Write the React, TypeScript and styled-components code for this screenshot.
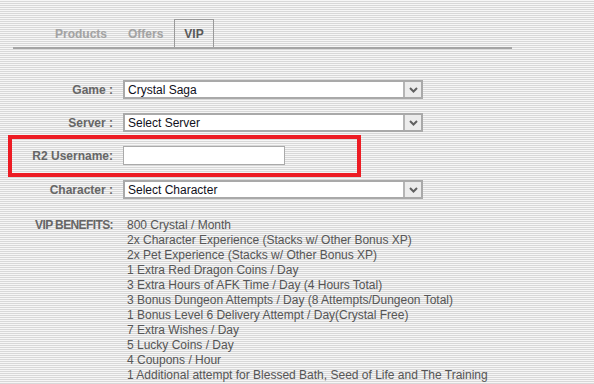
import styled, { createGlobalStyle } from 'styled-components';

const GlobalStyle = createGlobalStyle`
  html, body {
    margin: 0;
    padding: 0;
  }
  body {
    width: 594px;
    height: 384px;
    overflow: hidden;
    font-family: "Liberation Sans", Arial, sans-serif;
    font-size: 12px;
    background: repeating-linear-gradient(
      to bottom,
      #f6f6f6 0px,
      #f6f6f6 1px,
      #d8d8d8 1px,
      #d8d8d8 2px
    );
  }
`;

const Page = styled.div`
  display: flex;
  flex-direction: column;
  padding-top: 19px;
`;

const TabBar = styled.ul`
  display: flex;
  align-items: flex-end;
  margin: 0 0 0 13px;
  padding: 0 0 0 32px;
  width: 467px;
  list-style: none;
  border-bottom: 2px solid #a4a4a4;
`;

const Tab = styled.li<{ $active?: boolean }>`
  height: 26px;
  padding: 1px ${(p) => (p.$active ? '9px' : '9px')} 0;
  margin-right: 1px;
  display: flex;
  align-items: center;
  font-weight: bold;
  font-size: 12px;
  color: ${(p) => (p.$active ? '#5a5a5a' : '#a3a3a3')};
  border: 1px solid ${(p) => (p.$active ? '#9a9a9a' : 'transparent')};
  border-bottom: none;
`;

const Form = styled.div`
  display: flex;
  flex-direction: column;
  margin-top: 31px;
`;

const Row = styled.div<{ $gap?: number }>`
  display: flex;
  align-items: flex-end;
  margin-bottom: ${(p) => p.$gap ?? 0}px;
`;

const Label = styled.label<{ $width?: number; $tight?: boolean }>`
  width: ${(p) => p.$width ?? 113}px;
  flex: none;
  text-align: right;
  font-weight: bold;
  color: #666;
  padding-right: 10px;
  box-sizing: content-box;
  line-height: 15px;
  padding-bottom: 1px;
  letter-spacing: ${(p) => (p.$tight ? '-0.6px' : 'normal')};
`;

const SelectBox = styled.div`
  width: 300px;
  height: 19px;
  box-sizing: border-box;
  border: 2px solid #a9a9a9;
  background: #fff;
  display: flex;
  align-items: center;
  color: #101020;
  font-size: 12px;
`;

const SelectText = styled.span`
  flex: 1;
  padding-left: 3px;
`;

const ArrowButton = styled.span`
  width: 16px;
  height: 15px;
  background: #ececec;
  border-left: 2px solid #b5b5b5;
  display: flex;
  align-items: center;
  justify-content: center;
`;

const TextInput = styled.div`
  width: 162px;
  height: 19px;
  box-sizing: border-box;
  border: 1px solid #aaa;
  background: #fff;
`;

const Highlight = styled.div`
  width: 345px;
  height: 26px;
  margin: 3px 0 3px 8px;
  border: 4px solid #ed1c24;
  display: flex;
  align-items: flex-end;
  padding-bottom: 8px;
  box-sizing: content-box;
`;

const Benefits = styled.div`
  display: flex;
  margin-top: 19px;
`;

const BenefitList = styled.ul`
  list-style: none;
  margin: 0;
  padding: 0 0 0 4px;
  color: #555;
  line-height: 15px;
`;

function Chevron() {
  return (
    <svg width="9" height="6" viewBox="0 0 9 6">
      <path d="M1 1 L4.5 4.5 L8 1" stroke="#606060" strokeWidth="2" fill="none" />
    </svg>
  );
}

function Select({ value }: { value: string }) {
  return (
    <SelectBox>
      <SelectText>{value}</SelectText>
      <ArrowButton>
        <Chevron />
      </ArrowButton>
    </SelectBox>
  );
}

const benefits = [
  '800 Crystal / Month',
  '2x Character Experience (Stacks w/ Other Bonus XP)',
  '2x Pet Experience (Stacks w/ Other Bonus XP)',
  '1 Extra Red Dragon Coins / Day',
  '3 Extra Hours of AFK Time / Day (4 Hours Total)',
  '3 Bonus Dungeon Attempts / Day (8 Attempts/Dungeon Total)',
  '1 Bonus Level 6 Delivery Attempt / Day(Crystal Free)',
  '7 Extra Wishes / Day',
  '5 Lucky Coins / Day',
  '4 Coupons / Hour',
  '1 Additional attempt for Blessed Bath, Seed of Life and The Training',
];

export default function App() {
  return (
    <Page>
      <GlobalStyle />
      <TabBar>
        <Tab>Products</Tab>
        <Tab>Offers</Tab>
        <Tab $active>VIP</Tab>
      </TabBar>
      <Form>
        <Row $gap={14}>
          <Label>Game :</Label>
          <Select value="Crystal Saga" />
        </Row>
        <Row>
          <Label>Server :</Label>
          <Select value="Select Server" />
        </Row>
        <Highlight>
          <Label $width={101}>R2 Username:</Label>
          <TextInput />
        </Highlight>
        <Row>
          <Label>Character :</Label>
          <Select value="Select Character" />
        </Row>
        <Benefits>
          <Label as="div" $tight>VIP BENEFITS:</Label>
          <BenefitList>
            {benefits.map((b) => (
              <li key={b}>{b}</li>
            ))}
          </BenefitList>
        </Benefits>
      </Form>
    </Page>
  );
}
